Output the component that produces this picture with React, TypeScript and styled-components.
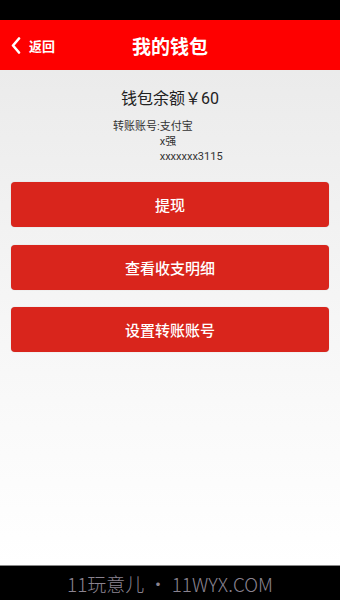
import styled, { createGlobalStyle } from 'styled-components';

const Global = createGlobalStyle`
  html, body { margin: 0; padding: 0; }
  body {
    font-family: Roboto, "Noto Sans CJK SC", "Liberation Sans", sans-serif;
  }
`;

const Screen = styled.div`
  width: 340px;
  height: 600px;
  display: flex;
  flex-direction: column;
  overflow: hidden;
`;

const StatusBar = styled.div`
  height: 20px;
  background: #000;
`;

const Header = styled.div`
  height: 50px;
  background: #fe0000;
  display: flex;
  align-items: center;
  position: relative;
  color: #fff;
`;

const BackButton = styled.div`
  display: flex;
  align-items: center;
  gap: 8px;
  padding-left: 11px;
  font-size: 13px;
  font-weight: 700;
`;

const Title = styled.div`
  position: absolute;
  left: 0;
  right: 0;
  text-align: center;
  font-size: 19px;
  font-weight: 700;
  pointer-events: none;
`;

const Content = styled.div`
  flex: 1;
  background: linear-gradient(#ebebeb, #f6f6f6 50%, #ffffff);
  padding: 0 11px;
  display: flex;
  flex-direction: column;
`;

const Balance = styled.div`
  margin-top: 17px;
  text-align: center;
  font-size: 16px;
  color: #222;
  line-height: 24px;
`;

const Account = styled.div`
  margin: 8px 0 0 102px;
  display: grid;
  grid-template-columns: auto auto;
  justify-content: start;
  font-size: 11px;
  line-height: 15px;
  color: #333;
`;

const Label = styled.span``;

const Value = styled.span`
  grid-column: 2;
`;

const Buttons = styled.div`
  margin-top: 18px;
  display: flex;
  flex-direction: column;
  gap: 17.5px;
`;

const Button = styled.div`
  height: 45px;
  border-radius: 4px;
  background: #d9251c;
  color: #fff;
  font-size: 15px;
  font-weight: 500;
  display: flex;
  align-items: center;
  justify-content: center;
  box-shadow: 0 0 1px rgba(0, 0, 0, 0.25);
`;

const Footer = styled.div`
  height: 34px;
  background: #000;
  color: #8a8390;
  font-size: 19px;
  font-weight: 300;
  display: flex;
  align-items: center;
  justify-content: center;
  border-top: 1px solid #888;
  font-family: "Noto Sans CJK SC", "Open Sans", sans-serif;
`;

export default function App() {
  return (
    <>
      <Global />
      <Screen>
        <StatusBar />
        <Header>
          <BackButton>
            <svg width="10" height="17" viewBox="0 0 10 17">
              <path d="M8 1.5 L2 8.5 L8 15.5" fill="none" stroke="#fff" strokeWidth="2.6" strokeLinecap="round" strokeLinejoin="round" />
            </svg>
            返回
          </BackButton>
          <Title>我的钱包</Title>
        </Header>
        <Content>
          <Balance>钱包余额￥60</Balance>
          <Account>
            <Label>转账账号:</Label>
            <Value>支付宝</Value>
            <Value>x强</Value>
            <Value>xxxxxxx3115</Value>
          </Account>
          <Buttons>
            <Button>提现</Button>
            <Button>查看收支明细</Button>
            <Button>设置转账账号</Button>
          </Buttons>
        </Content>
        <Footer>11玩意儿 • 11WYX.COM</Footer>
      </Screen>
    </>
  );
}
